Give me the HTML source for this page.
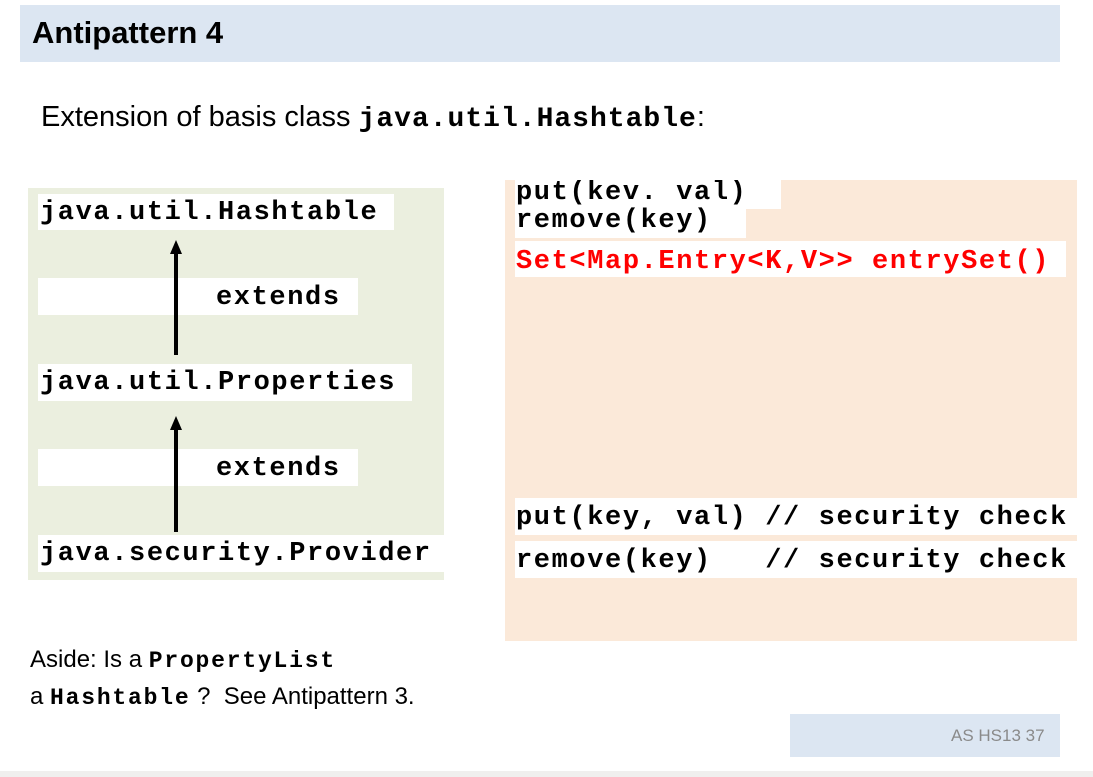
<!DOCTYPE html>
<html><head><meta charset="utf-8"><style>
body{margin:0;width:1093px;height:777px;background:#fff;position:relative;overflow:hidden;font-family:"Liberation Sans",sans-serif}
.a{position:absolute}
.m{font-family:"Liberation Mono",monospace;font-weight:bold;font-size:27px;letter-spacing:1.6px;line-height:37px;white-space:pre}
.w{background:#fff;position:absolute}
</style></head><body>
<div class="a" style="left:20px;top:5px;width:1040px;height:57px;background:#dce6f2"></div>
<div class="a" style="left:32px;top:15px;font-size:31px;font-weight:bold;color:#000">Antipattern 4</div>
<div class="a" style="left:41px;top:101px;font-size:29px;white-space:pre">Extension of basis class <span class="m" style="font-size:28px;line-height:30px;letter-spacing:1px">java.util.Hashtable</span>:</div>

<div class="a" style="left:28px;top:188px;width:416px;height:392px;background:#ebefdf"></div>
<div class="w m" style="left:38px;top:194px;width:356px;height:36px;line-height:38px;padding-left:2px;box-sizing:border-box">java.util.Hashtable</div>
<div class="w m" style="left:38px;top:278px;width:320px;height:37px;padding-left:178px;box-sizing:border-box;line-height:40px">extends</div>
<div class="w m" style="left:38px;top:364px;width:374px;height:37px;padding-left:2px;box-sizing:border-box;line-height:39px">java.util.Properties</div>
<div class="w m" style="left:38px;top:449px;width:320px;height:37px;padding-left:178px;box-sizing:border-box;line-height:40px">extends</div>
<div class="w m" style="left:38px;top:535px;width:406px;height:37px;padding-left:2px;box-sizing:border-box;line-height:38px">java.security.Provider</div>
<svg class="a" style="left:0;top:0" width="1093" height="777">
<line x1="176" y1="355" x2="176" y2="250" stroke="#000" stroke-width="4"/>
<polygon points="176,240 170,254 182,254" fill="#000"/>
<line x1="176" y1="532" x2="176" y2="427" stroke="#000" stroke-width="4"/>
<polygon points="176,416 170,430 182,430" fill="#000"/>
</svg>

<div class="a" style="left:505px;top:180px;width:572px;height:461px;background:#fbe9d9"></div>
<div class="w" style="left:515px;top:180px;width:266px;height:29px;overflow:hidden"><div class="a m" style="left:1px;top:-7px;line-height:40px">put(kev. val)</div></div>
<div class="w" style="left:515px;top:209px;width:231px;height:29px"></div>
<div class="a m" style="left:516px;top:203px;line-height:37px">remove(key)</div>
<div class="w m" style="left:515px;top:241px;width:551px;height:36px;color:#f00;padding-left:1px;box-sizing:border-box;line-height:42px">Set&lt;Map.Entry&lt;K,V&gt;&gt; entrySet()</div>
<div class="w m" style="left:515px;top:498px;width:562px;height:37px;padding-left:1px;box-sizing:border-box;line-height:40px">put(key, val) // security check</div>
<div class="w m" style="left:515px;top:541px;width:562px;height:37px;padding-left:1px;box-sizing:border-box;line-height:40px">remove(key)   // security check</div>

<div class="a" style="left:30px;top:645px;font-size:24px;line-height:30px;white-space:pre">Aside: Is a <span class="m" style="font-size:23px;letter-spacing:1.8px;line-height:30px">PropertyList</span></div>
<div class="a" style="left:30px;top:682px;font-size:24px;line-height:30px;white-space:pre">a <span class="m" style="font-size:23px;letter-spacing:1.8px;line-height:30px">Hashtable</span> ?  See Antipattern 3.</div>

<div class="a" style="left:790px;top:714px;width:270px;height:43px;background:#dce6f2"></div>
<div class="a" style="left:951px;top:726px;font-size:17px;color:#8a8a8a">AS HS13 37</div>
<div class="a" style="left:0;top:771px;width:1093px;height:6px;background:#f0efee"></div>
</body></html>
